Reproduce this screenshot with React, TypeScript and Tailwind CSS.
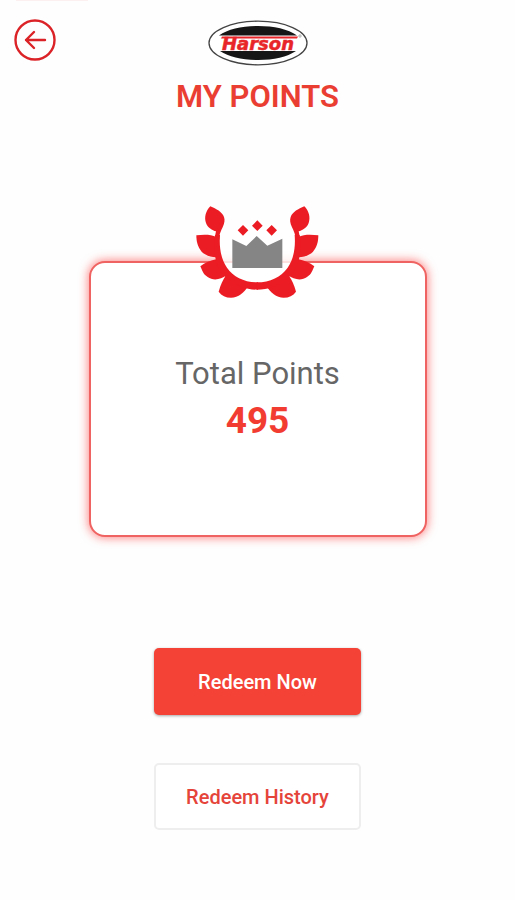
import type { ReactNode } from 'react';

const BackIcon = () => (
  <svg viewBox="0 0 42 42" className="size-[42px]" fill="none" stroke="#db2327" strokeWidth="2.4" strokeLinecap="round" strokeLinejoin="round">
    <circle cx="21" cy="21" r="19.5" />
    <path d="M31 21H12M20 13l-8 8 8 8" />
  </svg>
);

const HarsonLogo = () => (
  <svg viewBox="0 0 100 46" className="w-[100px] h-[46px]">
    <ellipse cx="50" cy="23" rx="49" ry="21.8" fill="#fff" stroke="#444" strokeWidth="1.3" />
    <path d="M11 15.5C20 9 34 6 50 6s30 3 39 9.5z" fill="#161616" />
    <path d="M12 31C21 37 34 40 50 40s29-3 38-9z" fill="#161616" />
    <path d="M14 16.5H90L89 18.5H13z" fill="#e8262a" />
    <text
      x="50"
      y="30"
      textAnchor="middle"
      fontFamily="DejaVu Sans, sans-serif"
      fontWeight="700"
      fontStyle="italic"
      fontSize="18"
      fill="#e8262a"
      stroke="#e8262a"
      strokeWidth="0.5"
    >
      Harson
    </text>
    <circle cx="92" cy="16" r="1.2" fill="none" stroke="#777" strokeWidth="0.6" />
  </svg>
);

// One half of the laurel, mirrored for the other side
const LaurelHalf = () => (
  <>
    <path d="M76 34C62 48 57 68 63 84C68 98 82 106 93 109C91 116 90 124 90 132L103 132C103 116 108 108 113 97C119 84 120 74 117 66C111 50 94 42 76 34z" />
    <path d="M34 121C56 118 78 118 94 126L98 150L100 186C86 188 64 184 50 170C38 156 34 140 34 121z" />
    <path d="M46 214C60 202 76 197 96 192L130 236L124 241C108 254 84 258 68 246C54 238 52 226 46 214z" />
    <path d="M101 290C106 270 114 254 122 242L190 272C178 292 160 308 138 308C122 308 110 302 101 290z" />
    {/* ring, from the top leaf down to the middle */}
    <path d="M90 120C86 152 88 180 94 200C102 226 114 240 132 254C154 272 184 284 219 284V262C178 262 146 246 126 218C108 192 102 158 105 120z" />
  </>
);

const LaurelIcon = () => (
  <svg viewBox="0 0 435 330" className="w-[145px] h-[110px]">
    <path d="M106 106C98 130 100 180 114 206C134 250 170 264 217 264S300 250 320 206C334 180 336 130 328 106z" fill="#fff" fillOpacity="0.8" />
    <g fill="#ec1c24">
      <LaurelHalf />
      <g transform="translate(434 0) scale(-1 1)">
        <LaurelHalf />
      </g>
      <path d="M174 90l16 16-16 16-16-16zM217 76l16 16-16 16-16-16zM260 90l16 16-16 16-16-16z" />
    </g>
    <path d="M142 133L184 153L215 123L247 152L292 131V219H142z" fill="#858585" />
  </svg>
);

interface ActionButtonProps {
  children: ReactNode;
  variant: 'filled' | 'outlined';
}

const ActionButton = ({ children, variant }: ActionButtonProps) => (
  <button
    type="button"
    className={`w-[207px] h-[67px] rounded-[5px] text-xl font-medium ${
      variant === 'filled'
        ? 'bg-[#f44336] text-white shadow-[0_1px_3px_rgba(0,0,0,0.35)]'
        : 'bg-white text-[#e5443a] border-2 border-[#eeeeee]'
    }`}
  >
    {children}
  </button>
);

export default function App() {
  const points = 495;

  return (
    <div className="relative min-h-screen bg-[#fefefe] font-['Roboto',sans-serif]">
      <div className="absolute top-0 left-4 h-px w-18 bg-[#fdf0f1]" />
      <button type="button" aria-label="Back" className="absolute top-[19px] left-[14px]">
        <BackIcon />
      </button>

      <header className="flex flex-col items-center pt-5">
        <HarsonLogo />
        <h1 className="mt-3 text-[31px] leading-[38px] font-semibold text-[#ea3e33]">MY POINTS</h1>
      </header>

      <main className="flex flex-col items-center px-4 pt-[145px]">
        <section className="relative flex h-[276px] w-full max-w-[338px] flex-col items-center rounded-2xl border-2 border-[#ef6462] bg-white pt-[90px] shadow-[0_0_10px_1px_rgba(255,40,40,0.55)]">
          <div className="absolute inset-x-0 -top-17 flex justify-center">
            <LaurelIcon />
          </div>
          <h2 className="text-[31px] leading-[42px] text-[#666666]">Total Points</h2>
          <p className="mt-1.5 text-[37px] leading-10 font-bold text-[#f23c32]">{points}</p>
        </section>

        <div className="mt-[111px] flex flex-col gap-12">
          <ActionButton variant="filled">Redeem Now</ActionButton>
          <ActionButton variant="outlined">Redeem History</ActionButton>
        </div>
      </main>
    </div>
  );
}
